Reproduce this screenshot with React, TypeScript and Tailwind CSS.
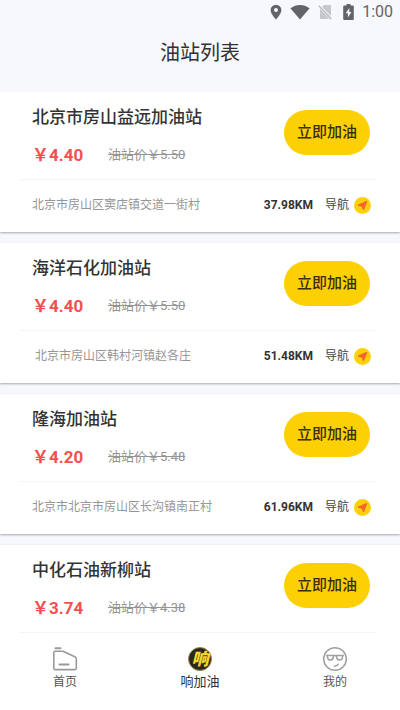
import type { ReactNode } from 'react';

const stations = [
  { name: '北京市房山益远加油站', price: '4.40', oldPrice: '5.50', address: '北京市房山区窦店镇交道一街村', km: '37.98' },
  { name: '海洋石化加油站', price: '4.40', oldPrice: '5.50', address: ' 北京市房山区韩村河镇赵各庄', km: '51.48' },
  { name: '隆海加油站', price: '4.20', oldPrice: '5.48', address: '北京市北京市房山区长沟镇南正村', km: '61.96' },
  { name: '中化石油新柳站', price: '3.74', oldPrice: '4.38', address: '', km: '' },
];

function StatusBar() {
  return (
    <div className="flex h-6 items-center justify-end px-[7px] text-[#636467]">
      <svg className="mr-[8px] h-[16px] w-[12px]" viewBox="0 0 12 16" fill="currentColor">
        <path fillRule="evenodd" d="M6 .7a5.4 5.4 0 0 0-5.4 5.4C.6 10 6 15.600 6 15.600s5.400-5.600 5.400-9.500A5.400 5.400 0 0 0 6 .7Zm0 3.400a2 2 0 1 1 0 4 2 2 0 0 1 0-4Z" />
      </svg>
      <svg className="mr-[8px] h-[16px] w-[20px]" viewBox="0 0 20 16" fill="currentColor">
        <path d="M.4 4.300C6 -.2 14 -.2 19.600 4.300L10 15.500Z" />
      </svg>
      <svg className="mr-[10px] h-[16px] w-[15px]" viewBox="0 0 15 16">
        <path d="M6 1H13V12L4 3Z M2 5 11.500 14.800H2Z" fill="#c6c7cb" />
        <path d="M2 5V14.800H11.500Z" fill="#c6c7cb" />
        <path d="M.8 1.800 13.500 15" stroke="#b9babe" strokeWidth="1.300" />
      </svg>
      <svg className="mr-[8px] h-[16px] w-[11px]" viewBox="0 0 11 16" fill="currentColor">
        <path fillRule="evenodd" d="M3.500 0h4v1.500h2.300a1 1 0 0 1 1 1V15a1 1 0 0 1-1 1H1.200a1 1 0 0 1-1-1V2.500a1 1 0 0 1 1-1h2.300ZM6.300 4 2.700 9.300h2.200v4.200l3.500-5.600H6.300Z" />
      </svg>
      <span className="text-base">1:00</span>
    </div>
  );
}

function NavigateIcon() {
  return (
    <svg className="h-[17px] w-[17px]" viewBox="0 0 17 17">
      <circle cx="8.500" cy="8.500" r="8.500" fill="#fdd00b" />
      <path d="M12.900 4.300 9.500 13 8.300 9.500 4.100 8.100Z" fill="#f3652c" stroke="#f3652c" strokeWidth="1" strokeLinejoin="round" />
    </svg>
  );
}

function StationCard({ station }: { station: (typeof stations)[number] }) {
  return (
    <li className="h-[140px] shrink-0 bg-white pr-6 pl-5 shadow-[0_1px_2px_rgba(0,0,0,0.32)]">
      <div className="flex h-[88px] justify-between border-b border-[#f5f5f7] pr-[6px] pl-3">
        <div className="pt-[13px]">
          <h2 className="text-[17px] leading-6 font-medium text-[#333]">{station.name}</h2>
          <div className="mt-[14px] flex items-center leading-6">
            <span className="w-[76px] text-[17px] font-bold text-[#f5504f]">￥{station.price}</span>
            <del className="text-[13px] text-[#949494]">油站价￥{station.oldPrice}</del>
          </div>
        </div>
        <button className="mt-[18px] h-[45px] w-[86px] rounded-full bg-[#fdd003] text-[15px] font-medium text-[#3a2f0c]">
          立即加油
        </button>
      </div>
      {station.address && (
        <div className="flex h-[50px] items-center pr-[5px] pl-3 text-[12px]">
          <p className="flex-1 whitespace-pre text-[#969696]">{station.address}</p>
          <span className="mr-3 font-bold text-[#333]">{station.km}KM</span>
          <a href="#navigate" className="flex items-center gap-[5px] text-[#444]">
            导航
            <NavigateIcon />
          </a>
        </div>
      )}
    </li>
  );
}

function Tab({ label, active, children }: { label: string; active?: boolean; children: ReactNode }) {
  return (
    <a
      href="#tab"
      className={active ? 'flex flex-col items-center text-[13px] leading-5 text-[#303030]' : 'flex flex-col items-center text-[12px] leading-5 text-[#555]'}
    >
      {children}
      {label}
    </a>
  );
}

function HomeIcon() {
  return (
    <svg className="h-[26px] w-[26px]" viewBox="0 0 26 26" fill="none" stroke="#9a9a9a" strokeWidth="1.600" strokeLinecap="round" strokeLinejoin="round">
      <path d="M3.500 2.300H8.500" strokeWidth="2" />
      <path d="M1.800 6.200Q1.800 5.200 2.800 5.200H11L23.300 11Q24.300 11.500 24.300 12.500V22.600Q24.300 23.600 23.300 23.600H2.800Q1.800 23.600 1.800 22.600Z" />
      <path d="M7.500 18.600H16.500" strokeWidth="2" />
    </svg>
  );
}

function FuelIcon() {
  return (
    <span className="my-[1px] flex h-6 w-6 items-center justify-center rounded-full border border-[#a08f4a] bg-[#2a2720] text-[17px] leading-none font-black text-[#f6d629] italic">
      响
    </span>
  );
}

function MineIcon() {
  return (
    <svg className="h-[26px] w-[26px]" viewBox="0 0 26 26" fill="none" stroke="#a0a0a0" strokeWidth="1.500" strokeLinecap="round" strokeLinejoin="round">
      <circle cx="13" cy="13" r="11.300" />
      <path d="M4.500 9.500H21.500M5.500 9.500V11.300Q5.700 14 8.300 14T11.500 11V9.500M14.500 9.500V11Q15.100 14 17.700 14T20.500 11.300V9.500M12.300 20.200Q15 20.200 16.300 18.200" />
    </svg>
  );
}

export default function App() {
  return (
    <div className="flex h-screen flex-col overflow-hidden bg-[#f7f8fd] font-[Roboto,'Noto_Sans_CJK_SC',sans-serif]">
      <header className="shrink-0 pb-[19px]">
        <StatusBar />
        <h1 className="pt-[9px] text-center text-[20px] leading-10 text-[#303030]">油站列表</h1>
      </header>

      <ul className="flex min-h-0 flex-1 flex-col gap-[11px] overflow-hidden">
        {stations.map((station) => (
          <StationCard key={station.name} station={station} />
        ))}
      </ul>

      <nav className="relative flex h-[77px] shrink-0 justify-between bg-white px-[52px] pt-[13px]">
        <Tab label="首页">
          <HomeIcon />
        </Tab>
        <Tab label="响加油" active>
          <FuelIcon />
        </Tab>
        <Tab label="我的">
          <MineIcon />
        </Tab>
      </nav>
    </div>
  );
}
